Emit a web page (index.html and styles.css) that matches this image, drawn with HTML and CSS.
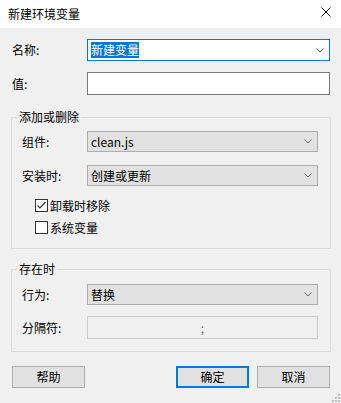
FILE: index.html
```html
<!DOCTYPE html>
<html lang="zh-CN">
<head>
    <meta charset="UTF-8">
    <title>新建环境变量</title>
    <link rel="stylesheet" href="styles.css">
</head>
<body>
    <div class="dialog">
        <div class="titlebar">
            <span class="title">新建环境变量</span>
            <svg class="close" width="10" height="10" viewBox="0 0 10 10">
                <path d="M0.5 0.5 L9.5 9.5 M9.5 0.5 L0.5 9.5" stroke="#000" stroke-width="1" fill="none"/>
            </svg>
        </div>

        <div class="content">
            <div class="row top-row name-row">
                <span class="label wide">名称:</span>
                <div class="combo combo-edit">
                    <span class="selected">新建变量</span>
                    <svg class="chevron" width="8" height="5" viewBox="0 0 8 5"><path d="M0.5 0.5 L4 4 L7.5 0.5" stroke="#606060" fill="none"/></svg>
                </div>
            </div>
            <div class="row top-row value-row">
                <span class="label wide">值:</span>
                <div class="textbox"></div>
            </div>

            <div class="group group-first">
                <div class="group-title">添加或删除</div>
                <div class="group-body">
                    <div class="row">
                        <span class="label">组件:</span>
                        <div class="combo">
                            <span>clean.js</span>
                            <svg class="chevron" width="8" height="5" viewBox="0 0 8 5"><path d="M0.5 0.5 L4 4 L7.5 0.5" stroke="#606060" fill="none"/></svg>
                        </div>
                    </div>
                    <div class="row gap">
                        <span class="label">安装时:</span>
                        <div class="combo">
                            <span>创建或更新</span>
                            <svg class="chevron" width="8" height="5" viewBox="0 0 8 5"><path d="M0.5 0.5 L4 4 L7.5 0.5" stroke="#606060" fill="none"/></svg>
                        </div>
                    </div>
                    <div class="check gap">
                        <span class="box">
                            <svg width="11" height="11" viewBox="0 0 11 11"><path d="M1.5 5.5 L4 8 L9.5 2" stroke="#333" stroke-width="1.2" fill="none"/></svg>
                        </span>
                        <span>卸载时移除</span>
                    </div>
                    <div class="check small-gap">
                        <span class="box"></span>
                        <span>系统变量</span>
                    </div>
                </div>
            </div>

            <div class="group group-second">
                <div class="group-title">存在时</div>
                <div class="group-body body-second">
                    <div class="row">
                        <span class="label">行为:</span>
                        <div class="combo">
                            <span>替换</span>
                            <svg class="chevron" width="8" height="5" viewBox="0 0 8 5"><path d="M0.5 0.5 L4 4 L7.5 0.5" stroke="#606060" fill="none"/></svg>
                        </div>
                    </div>
                    <div class="row sep-row">
                        <span class="label">分隔符:</span>
                        <div class="textbox disabled">;</div>
                    </div>
                </div>
            </div>

            <div class="buttons">
                <button class="btn">帮助</button>
                <span class="spacer"></span>
                <button class="btn default">确定</button>
                <button class="btn">取消</button>
            </div>
        </div>

        <svg class="grip" width="10" height="10" viewBox="0 0 10 10">
            <rect x="7" y="1" width="2" height="2" fill="#bcbcbc"/>
            <rect x="4" y="4" width="2" height="2" fill="#bcbcbc"/>
            <rect x="7" y="4" width="2" height="2" fill="#bcbcbc"/>
            <rect x="1" y="7" width="2" height="2" fill="#bcbcbc"/>
            <rect x="4" y="7" width="2" height="2" fill="#bcbcbc"/>
            <rect x="7" y="7" width="2" height="2" fill="#bcbcbc"/>
        </svg>
    </div>
</body>
</html>
```

FILE: styles.css
```css
body {
    margin: 0;
    padding: 0;
    font-family: "Noto Sans CJK SC", "Noto Sans", sans-serif;
    font-size: 12px;
    color: #000;
    background-color: #f0f0f0;
}
.dialog {
    position: relative;
    width: 341px;
    height: 403px;
    background-color: #f0f0f0;
    overflow: hidden;
}
.titlebar {
    height: 28px;
    background-color: #fff;
    display: flex;
    align-items: center;
    padding: 0 10px 0 8px;
}
.title {
    flex: 1;
    line-height: 14px;
    margin-top: -1px;
}
.close {
    margin-top: -4px;
}
.content {
    padding: 0 11px 0 12px;
}
.row {
    display: flex;
    align-items: center;
    height: 21px;
}
.top-row {
    margin-top: 11px;
    height: 22px;
}
.value-row {
    height: 23px;
}
.label {
    width: 65px;
    flex: none;
    line-height: 14px;
}
.label.wide {
    width: 75px;
}
.combo {
    flex: 1;
    height: 100%;
    box-sizing: border-box;
    border: 1px solid #adadad;
    background-color: #e1e1e1;
    display: flex;
    align-items: center;
    padding: 0 5px 0 3px;
    line-height: 14px;
}
.combo span {
    flex: 1;
}
.combo-edit {
    background-color: #fff;
    border-color: #0078d7;
    padding-right: 5px;
}
.combo-edit .selected {
    flex: none;
    background-color: #0078d7;
    color: #fff;
    padding: 1px 0;
    margin-right: auto;
}
.chevron {
    flex: none;
}
.textbox {
    flex: 1;
    height: 100%;
    box-sizing: border-box;
    border: 1px solid #7a7a7a;
    background-color: #fff;
}
.textbox.disabled {
    border-color: #cccccc;
    background-color: #f0f0f0;
    color: #6d6d6d;
    text-align: center;
    line-height: 21px;
}
.group {
    border: 1px solid #dcdcdc;
    margin-left: -1px;
    margin-right: -1px;
}
.group-first {
    margin-top: 22px;
}
.group-second {
    margin-top: 20px;
}
.group-title {
    width: fit-content;
    margin: -8px 0 0 5px;
    padding: 0 2px;
    line-height: 14px;
    background-color: #f0f0f0;
}
.group-body {
    padding: 7px 12px 14px 10px;
}
.body-second {
    padding-top: 8px;
    padding-bottom: 12px;
}
.gap {
    margin-top: 13px;
}
.small-gap {
    margin-top: 9px;
}
.sep-row {
    margin-top: 11px;
    height: 23px;
}
.check {
    display: flex;
    align-items: center;
    height: 13px;
    padding-left: 13px;
    line-height: 14px;
}
.box {
    width: 13px;
    height: 13px;
    box-sizing: border-box;
    border: 1px solid #333;
    background-color: #fff;
    margin-right: 2px;
    display: flex;
    align-items: center;
    justify-content: center;
    flex: none;
}
.buttons {
    display: flex;
    margin-top: 14px;
    gap: 8px;
}
.spacer {
    flex: 1;
}
.btn {
    width: 73px;
    height: 22px;
    box-sizing: border-box;
    border: 1px solid #adadad;
    background-color: #e1e1e1;
    font-family: inherit;
    font-size: 12px;
    color: #000;
    padding: 0;
    line-height: 14px;
}
.btn.default {
    border: 2px solid #0078d7;
}
.grip {
    position: absolute;
    right: 0;
    bottom: 0;
}
```
